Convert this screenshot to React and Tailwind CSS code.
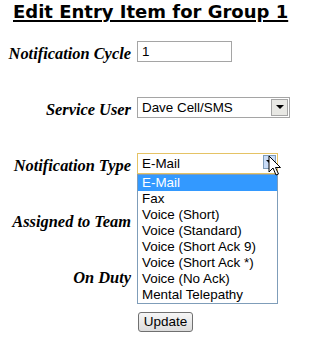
import React from 'react'

const labelCls = "w-[137px] shrink-0 text-right pr-[6px] font-['Liberation_Serif',serif] italic font-bold text-[16.4px] text-black"
const ctrlFont = "font-['Liberation_Sans',Arial,sans-serif] text-[13.4px] text-black"

const OPTIONS = [
  'E-Mail',
  'Fax',
  'Voice (Short)',
  'Voice (Standard)',
  'Voice (Short Ack 9)',
  'Voice (Short Ack *)',
  'Voice (No Ack)',
  'Mental Telepathy',
]

function Row({ label, children }) {
  return (
    <div className="flex items-center h-[56px]">
      <div className={labelCls}>
        <span className="relative top-[3px]">{label}</span>
      </div>
      {children}
    </div>
  )
}

function Cursor() {
  return (
    <svg className="absolute left-[268px] top-[155px]" width="14" height="22" viewBox="0 0 14 22">
      <path d="M1 1 L1 17 L5 13 L8 20 L10.5 19 L7.5 12.5 L12.5 12.5 Z" fill="#fff" stroke="#000" strokeWidth="1" strokeLinejoin="miter" />
    </svg>
  )
}

export default function App() {
  return (
    <div className="relative w-[311px] h-[343px] bg-white overflow-hidden">
      <h1 className="pl-[13px] pt-[1px] h-[23px] font-['DejaVu_Sans',Verdana,sans-serif] font-bold text-[18px] leading-[22px] text-black underline underline-offset-[2px] decoration-[2px]">
        Edit Entry Item for Group 1
      </h1>

      <Row label="Notification Cycle">
        <div className={`w-[95px] h-[21px] border border-[#a5a5a5] pl-[4px] leading-[19px] ${ctrlFont}`}>1</div>
      </Row>

      <Row label="Service User">
        <div className={`flex w-[153px] h-[21px] border border-[#a5a5a5] ${ctrlFont}`}>
          <div className="flex-1 pl-[4px] leading-[19px]">Dave Cell/SMS</div>
          <div className="w-[17px] h-[17px] mt-[1px] mr-[1px] border border-[#a5a5a5] bg-[#e8e8e4] flex items-center justify-center">
            <div className="w-0 h-0 border-l-[4px] border-r-[4px] border-t-[4px] border-l-transparent border-r-transparent border-t-black" />
          </div>
        </div>
      </Row>

      <Row label="Notification Type">
        <div className={`flex w-[141px] h-[21px] border border-[#e5c365] ${ctrlFont}`}>
          <div className="flex-1 pl-[4px] leading-[19px]">E-Mail</div>
          <div className="w-[13px] h-[14px] mt-[1px] mr-[1px] border border-[#7f9db9] bg-[#c9dcf7] flex items-center justify-center">
            <div className="w-0 h-0 border-l-[4px] border-r-[4px] border-t-[4px] border-l-transparent border-r-transparent border-t-black" />
          </div>
        </div>
      </Row>

      <Row label="Assigned to Team" />
      <Row label="On Duty" />

      <div className="pl-[138px] pt-[5px]">
        <button className={`w-[55px] h-[20px] border border-[#707070] rounded-[3px] bg-gradient-to-b from-[#f6f6f6] to-[#dcdcdc] leading-[18px] ${ctrlFont} text-[13.5px]`}>
          Update
        </button>
      </div>

      <div className={`absolute left-[137px] top-[174px] w-[141px] h-[130px] border border-[#7f9db9] bg-white ${ctrlFont}`}>
        {OPTIONS.map((o, i) => (
          <div key={o} className={`h-[16px] leading-[16px] pl-[4px] ${i === 0 ? 'bg-[#3399ff] text-white' : ''}`}>{o}</div>
        ))}
      </div>

      <Cursor />
    </div>
  )
}
